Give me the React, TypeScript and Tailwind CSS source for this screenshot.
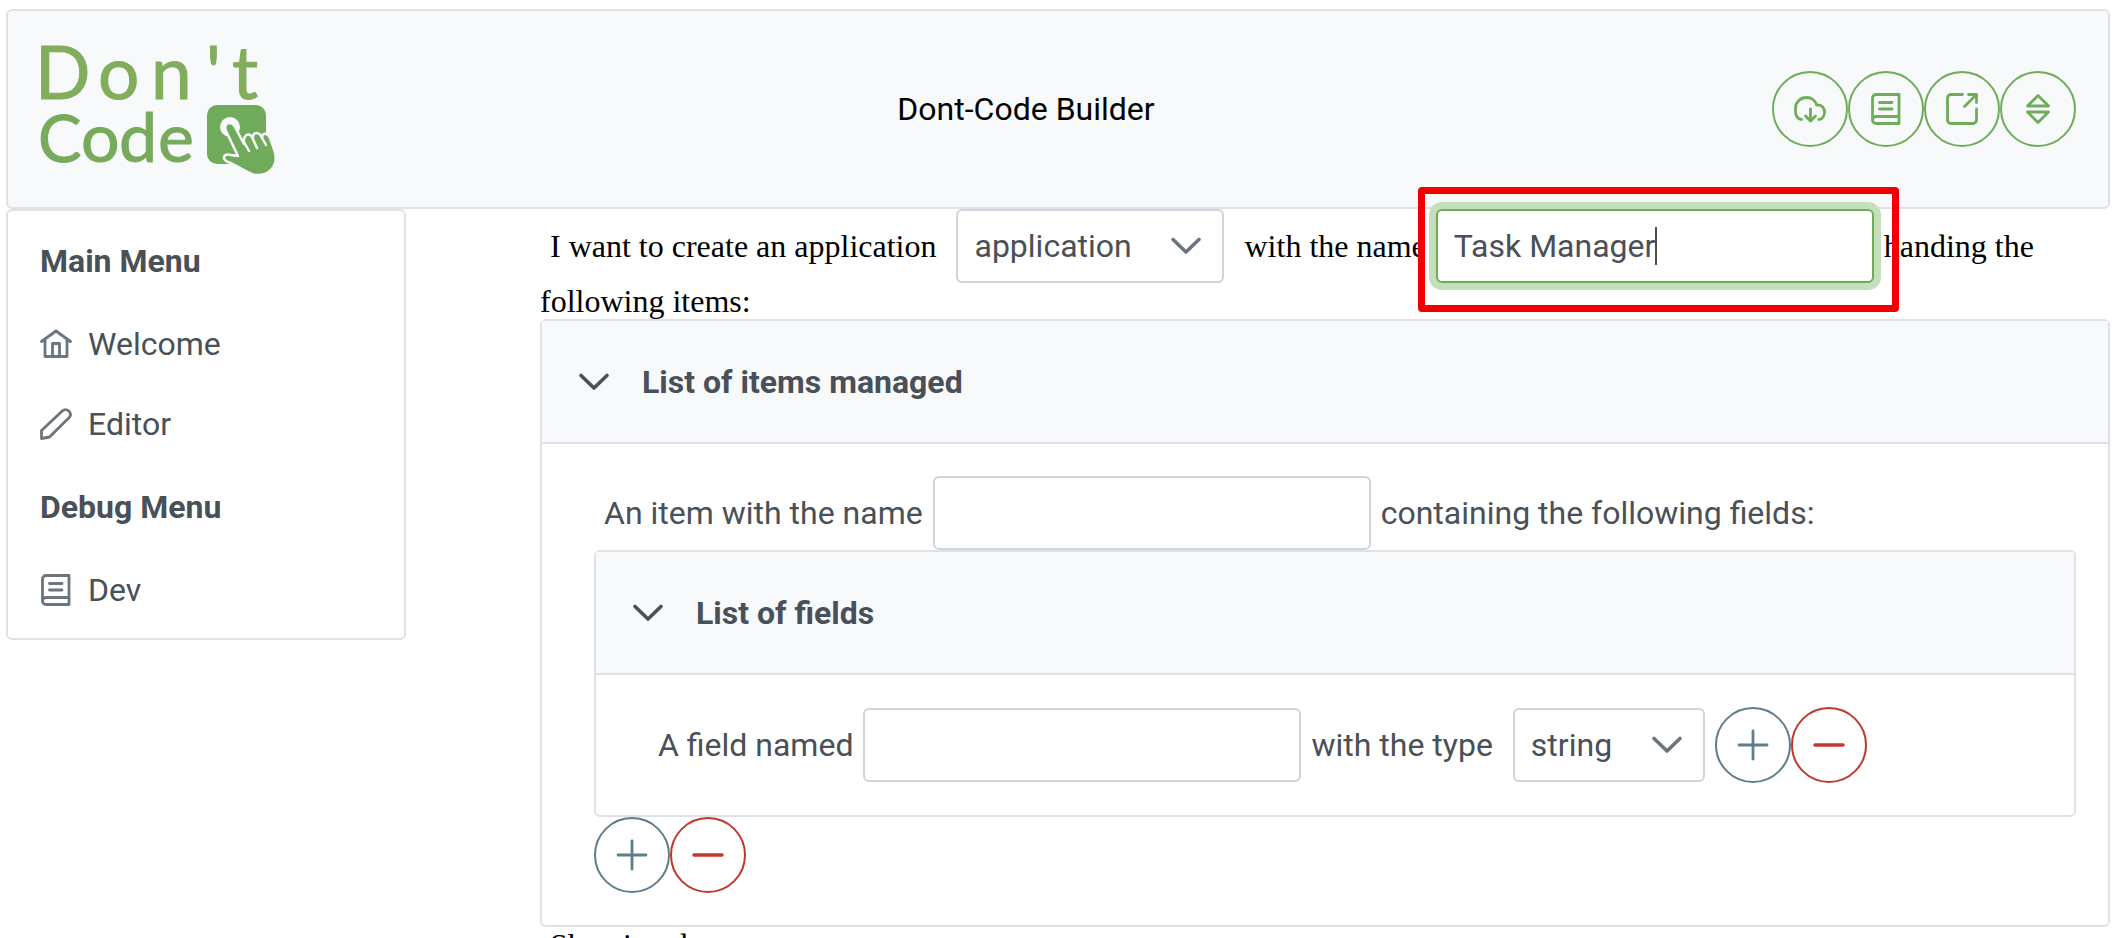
import { useEffect, useRef, useState } from "react";
import type { ReactNode, SVGProps } from "react";

type IconProps = SVGProps<SVGSVGElement>;

const Icon = ({ children, ...props }: IconProps & { children: ReactNode }) => (
  <svg width="32" height="32" viewBox="0 0 32 32" fill="none" stroke="currentColor" strokeWidth="2.8" strokeLinecap="round" strokeLinejoin="round" aria-hidden="true" {...props}>
    {children}
  </svg>
);

const BookIcon = () => (
  <Icon>
    <path d="M29 1.5H6A3.5 3.5 0 0 0 2.5 5v22A3.5 3.5 0 0 0 6 30.5H29V1.5M29 23.5H6A3.5 3.5 0 0 0 2.5 27M9.5 9.5H22M9.5 16H22" />
  </Icon>
);
const HomeIcon = () => (
  <Icon>
    <path d="M1.5 13.5L16 3L30.5 13.5M5 11.5V28.5H27V11.5M12.5 28V15.5H19.5V28" />
  </Icon>
);
const PencilIcon = () => (
  <Icon>
    <path d="M1.5 30.5V22.5L22.5 2.8Q25.5 .3 28.8 3Q32 6.5 29.2 9.5L9.5 29Z" />
  </Icon>
);
const CloudDownloadIcon = () => (
  <Icon>
    <path d="M7.5 26.5C4 26.5 1.5 23 1.5 18.5V15.5C1.5 9 6.5 4.5 12.5 4.5C17.5 4.5 21.5 7.5 22.5 12C27.5 11.5 30.5 15 30.5 19C30.5 23.5 28 26.5 25 26.5M16.5 16V28M11.5 23L16.5 28L21.5 23" />
  </Icon>
);
const ExternalIcon = () => (
  <Icon>
    <path d="M16.5 1.5H5A3.5 3.5 0 0 0 1.5 5V27A3.5 3.5 0 0 0 5 30.5H27A3.5 3.5 0 0 0 30.5 27V16M22.5 1.5H30.5V9.5M30 2L18.5 13.5" />
  </Icon>
);
const SortIcon = () => (
  <Icon>
    <path d="M16 2.5L26.5 13H5.5ZM16 29.5L26.5 19H5.5Z" />
  </Icon>
);
const PlusIcon = () => (
  <Icon>
    <path d="M16 2V30M2 16H30" />
  </Icon>
);
const MinusIcon = () => (
  <Icon strokeWidth="3.6">
    <path d="M2 16H30" />
  </Icon>
);
const ChevronIcon = ({ className = "" }: { className?: string }) => (
  <Icon className={className} strokeWidth="3.6">
    <path d="M3 9.5L16 22L29 9.5" />
  </Icon>
);

const Logo = () => (
  <svg className="overflow-visible" width="240" height="136" viewBox="0 0 240 136" role="img" aria-label="Don't Code">
    <g fontFamily="Lato, sans-serif" strokeWidth="1">
      <text y="58" fill="#82ad5c" stroke="#82ad5c" fontSize="73">
        <tspan x="-5">D</tspan>
        <tspan x="58">o</tspan>
        <tspan x="111">n</tspan>
        <tspan x="166">'</tspan>
        <tspan x="192">t</tspan>
      </text>
      <text y="121" fill="#77ab5b" stroke="#77ab5b" fontSize="68">
        <tspan x="-2" fontSize="65">C</tspan>
        <tspan x="41">o</tspan>
        <tspan x="79">d</tspan>
        <tspan x="118">e</tspan>
      </text>
    </g>
    <g transform="translate(1 -1)">
      <rect x="166" y="65" width="59" height="59" rx="10" fill="#70ab5b" />
      <circle cx="189" cy="87" r="10" fill="#f8f9fb" />
      <path
        d="M185 91C183 87 185 83 188 83C191 83 193 85 194 87L203 104C202 94 208 92 212 98C212 91 218 92 221 97C222 92 227 93 229 98L233 109C239 126 228 136 214 135C208 134 197 126 187 122C180 119 183 113 190 115L197 116Z"
        fill="#70ab5b"
        stroke="#f8f9fb"
        strokeWidth="2.5"
        strokeLinejoin="round"
      />
      <path d="M203 102L208 111M211 97L216 108M220 96L225 105" fill="none" stroke="#f8f9fb" strokeWidth="2.5" strokeLinecap="round" />
    </g>
  </svg>
);

const tones = {
  green: "border-[#6fac5a] text-[#6fac5a]",
  slate: "border-[#607d8b] text-[#607d8b]",
  red: "border-[#c0392f] text-[#c0392f]",
};

const RoundButton = ({ label, tone, children }: { label: string; tone: keyof typeof tones; children: ReactNode }) => (
  <button type="button" aria-label={label} className={`flex size-[76px] shrink-0 items-center justify-center rounded-full border-2 ${tones[tone]}`}>
    {children}
  </button>
);

const AddRemove = () => (
  <div className="flex">
    <RoundButton label="Add" tone="slate"><PlusIcon /></RoundButton>
    <RoundButton label="Remove" tone="red"><MinusIcon /></RoundButton>
  </div>
);

const Dropdown = ({ label, options, width }: { label: string; options: string[]; width: string }) => (
  <span className={`relative inline-block font-[Roboto,sans-serif] text-[#495057] ${width}`}>
    <select aria-label={label} className="h-[74px] w-full appearance-none rounded-md border-2 border-[#ced4da] bg-white px-4 align-baseline">
      {options.map((o) => <option key={o}>{o}</option>)}
    </select>
    <ChevronIcon className="pointer-events-none absolute top-[21px] right-[22px] text-[#6c757d]" />
  </span>
);

const inputClass =
  "h-[74px] w-[438px] rounded-md border-2 border-[#ced4da] bg-white px-4 align-baseline font-[Roboto,sans-serif] text-[#495057] outline-none focus:border-[#6fac5a] focus:ring-[7px] focus:ring-[#c5dfbc]";

const Panel = ({ title, children }: { title: string; children: ReactNode }) => (
  <section className="rounded-md border-2 border-[#dee2e6] bg-white font-[Roboto,sans-serif] text-[#495057]">
    <h2 className="border-b-2 border-[#dee2e6] bg-[#f8f9fb] font-bold">
      <button type="button" className="flex h-[121px] w-full items-center gap-8 px-9 text-left">
        <ChevronIcon />
        {title}
      </button>
    </h2>
    {children}
  </section>
);

const MenuLink = ({ icon, children }: { icon: ReactNode; children: ReactNode }) => (
  <a href="#" className="flex h-20 items-center gap-4 px-8">
    <span className="text-[#6c757d]">{icon}</span>
    {children}
  </a>
);

export default function App() {
  const [name, setName] = useState("Task Manager");
  const nameInput = useRef<HTMLInputElement>(null);
  useEffect(() => {
    nameInput.current?.focus();
    nameInput.current?.setSelectionRange(12, 12);
  }, []);

  return (
    <div className="h-screen overflow-hidden bg-white pt-[9px] pr-[5px] pl-[6px] text-[32px] leading-[38px]">
      <header className="flex h-[200px] items-center justify-between rounded-md border-2 border-[#dee2e6] bg-[#f8f9fb] px-8 font-[Roboto,sans-serif]">
        <Logo />
        <h1 className="text-black">Dont-Code Builder</h1>
        <div className="flex">
          <RoundButton label="Download" tone="green"><CloudDownloadIcon /></RoundButton>
          <RoundButton label="Documentation" tone="green"><BookIcon /></RoundButton>
          <RoundButton label="Open in new window" tone="green"><ExternalIcon /></RoundButton>
          <RoundButton label="Expand" tone="green"><SortIcon /></RoundButton>
        </div>
      </header>

      <div className="flex items-start gap-[134px]">
        <nav className="w-[400px] shrink-0 rounded-md border-2 border-[#dee2e6] pt-[7px] pb-2 font-[Roboto,sans-serif] text-[#495057]">
          <h2 className="flex h-[86px] items-center px-8 font-bold">Main Menu</h2>
          <MenuLink icon={<HomeIcon />}>Welcome</MenuLink>
          <MenuLink icon={<PencilIcon />}>Editor</MenuLink>
          <h2 className="flex h-[86px] items-center px-8 font-bold">Debug Menu</h2>
          <MenuLink icon={<BookIcon />}>Dev</MenuLink>
        </nav>

        <main className="min-w-0 flex-1 font-['Liberation_Serif',serif] text-black">
          <div className="leading-[36px]">
            <span className="ml-[10px]">I want to create an application</span>{" "}
            <span className="mx-3"><Dropdown label="Kind" options={["application"]} width="w-[268px]" /></span>{" "}
            <label htmlFor="app-name">with the name</label>
            <span className="relative ml-[10px] inline-block">
              <input id="app-name" ref={nameInput} value={name} onChange={(e) => setName(e.target.value)} className={`${inputClass} caret-transparent`} />
              <span className="pointer-events-none absolute inset-y-0 left-[18px] flex items-center font-[Roboto,sans-serif]" aria-hidden="true">
                <span className="invisible whitespace-pre">{name}</span>
                <span className="h-[38px] w-[2px] bg-[#495057]" />
              </span>
              <span className="pointer-events-none absolute -top-[22px] -right-[25px] -bottom-[29px] -left-[18px] rounded-sm border-[7px] border-[#f00000]" />
            </span>
            <span className="ml-[10px]">handing the following items:</span>
          </div>

          <Panel title="List of items managed">
            <div className="py-8 pr-8 pl-[52px]">
              <div className="flex items-center gap-[10px] pl-[10px]">
                <label htmlFor="item-name">An item with the name</label>
                <input id="item-name" className={inputClass} />
                <span>containing the following fields:</span>
              </div>
              <Panel title="List of fields">
                <div className="flex items-center gap-[10px] px-[62px] py-8">
                  <label htmlFor="field-name">A field named</label>
                  <input id="field-name" className={inputClass} />
                  <span className="mr-[10px]">with the type</span>
                  <Dropdown label="Field type" options={["string"]} width="w-[192px]" />
                  <AddRemove />
                </div>
              </Panel>
              <AddRemove />
            </div>
          </Panel>
          <p className="ml-[10px] leading-[36px]">Showing d</p>
        </main>
      </div>
    </div>
  );
}
